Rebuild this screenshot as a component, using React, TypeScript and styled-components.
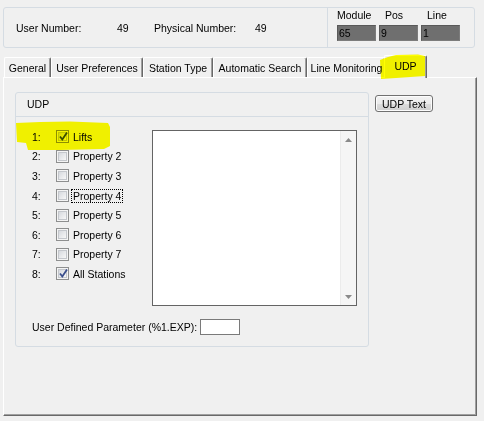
import React from "react";
import styled, { createGlobalStyle } from "styled-components";

const GlobalStyle = createGlobalStyle`
	html, body {
		margin: 0;
		padding: 0;
		background: #f0f0f0;
	}
	body {
		font-family: "Liberation Sans", Arial, sans-serif;
		font-size: 10.5px;
		color: #000;
	}
	* {
		box-sizing: border-box;
	}
`;

const Page = styled.div`
	position: relative;
	width: 484px;
	height: 421px;
	padding: 7px 0 0 3px;
	overflow: hidden;
`;

const InfoBox = styled.div`
	display: flex;
	width: 472px;
	height: 41px;
	border: 1px solid #d5dce3;
	border-radius: 3px;
`;

const NumbersPart = styled.div`
	display: flex;
	align-items: center;
	width: 323px;
	padding-left: 12px;
`;

const Cell = styled.span<{ $w?: number }>`
	width: ${({ $w }) => ($w ? `${$w}px` : "auto")};
	white-space: nowrap;
`;

const AddressPart = styled.div`
	display: flex;
	gap: 3px;
	flex: 1;
	padding: 1px 0 0 9px;
	border-left: 1px solid #d5dce3;
`;

const AddressCol = styled.div`
	display: flex;
	flex-direction: column;
	width: 39px;
`;

const AddressLabel = styled.div<{ $indent: number }>`
	height: 13px;
	line-height: 13px;
	margin-bottom: 3px;
	padding-left: ${({ $indent }) => $indent}px;
	white-space: nowrap;
`;

const AddressValue = styled.div`
	height: 16px;
	line-height: 14px;
	padding-left: 1px;
	background: #6f6f6f;
	border: 1px solid;
	border-color: #595959 #7c7c7c #7c7c7c #595959;
`;

const TabStrip = styled.div`
	display: flex;
	align-items: flex-end;
	height: 22px;
	margin-top: 7px;
	padding-left: 1px;
	position: relative;
	z-index: 1;
`;

const Tab = styled.div<{ $w: number; $active?: boolean }>`
	position: relative;
	z-index: ${({ $active }) => ($active ? 1 : 0)};
	width: ${({ $w }) => $w}px;
	height: ${({ $active }) => ($active ? 23 : 20)}px;
	margin-bottom: ${({ $active }) => ($active ? -1 : 0)}px;
	margin-left: ${({ $active }) => ($active ? -2 : 0)}px;
	display: flex;
	align-items: center;
	justify-content: center;
	padding-bottom: ${({ $active }) => ($active ? 2 : 0)}px;
	white-space: nowrap;
	background: #f0f0f0;
	border-top: 1px solid #ffffff;
	border-left: 1px solid #ffffff;
	border-right: 1px solid #696969;
	box-shadow: inset -1px 0 0 #a0a0a0;
	border-radius: 2px 2px 0 0;
`;

const Pane = styled.div`
	display: flex;
	align-items: flex-start;
	gap: 6px;
	width: 474px;
	height: 339px;
	padding: 14px 0 0 11px;
	border-top: 1px solid #ffffff;
	border-left: 1px solid #ffffff;
	border-right: 1px solid #696969;
	border-bottom: 1px solid #696969;
	box-shadow: inset -1px -1px 0 #a0a0a0;
`;

const Group = styled.div`
	width: 354px;
	height: 255px;
	border: 1px solid #d5dce3;
	border-radius: 3px;
`;

const GroupHeader = styled.div`
	height: 24px;
	line-height: 23px;
	padding-left: 11px;
	border-bottom: 1px solid #d5dce3;
`;

const GroupBody = styled.div`
	padding: 10px 11px 0 16px;
`;

const ListArea = styled.div`
	display: flex;
	align-items: flex-start;
`;

const RowList = styled.div`
	width: 120px;
	display: flex;
	flex-direction: column;
`;

const Row = styled.div`
	display: flex;
	align-items: center;
	height: 19.6px;
`;

const RowNumber = styled.span`
	width: 24px;
`;

const CheckBox = styled.span`
	position: relative;
	width: 13px;
	height: 13px;
	border: 1px solid #8e8f8f;
	background: #f4f4f4;
	flex-shrink: 0;

	&::before {
		content: "";
		position: absolute;
		inset: 1px;
		background: linear-gradient(135deg, #d6d9de, #f7f7f7);
		border: 1px solid #c4c7cc;
	}

	svg {
		position: absolute;
		left: 1px;
		top: 0px;
	}
`;

const RowLabel = styled.span<{ $focused?: boolean }>`
	margin-left: 2px;
	padding: 0 1px;
	line-height: 12px;
	border: 1px dotted ${({ $focused }) => ($focused ? "#000" : "transparent")};
	white-space: nowrap;
`;

const ListBox = styled.div`
	display: flex;
	justify-content: flex-end;
	margin-top: 3px;
	width: 206px;
	height: 176px;
	background: #fff;
	border: 1px solid #646464;
`;

const ScrollBar = styled.div`
	width: 16px;
	display: flex;
	flex-direction: column;
	align-items: center;
	justify-content: space-between;
	padding: 7px 0 6px;
	background: #f5f5f5;
	border-left: 1px solid #ebebeb;
`;

const ParamRow = styled.div`
	display: flex;
	align-items: center;
	margin-top: 13px;
`;

const ParamLabel = styled.span`
	width: 168px;
	white-space: nowrap;
`;

const ParamInput = styled.div`
	width: 40px;
	height: 16px;
	background: #fff;
	border: 1px solid #7a7a7a;
`;

const Button = styled.div`
	margin-top: 3px;
	width: 58px;
	height: 17px;
	display: flex;
	align-items: center;
	justify-content: center;
	border: 1px solid #707070;
	border-radius: 3px;
	background: linear-gradient(#f2f2f2, #ebebeb 50%, #dddddd 51%, #cfcfcf);
	box-shadow: inset 0 0 0 1px #fcfcfc;
	white-space: nowrap;
`;

const Marker = styled.svg`
	position: absolute;
	left: 0;
	top: 0;
	z-index: 2;
	pointer-events: none;
	mix-blend-mode: multiply;
`;

const tabs = [
	{ label: "General", w: 47 },
	{ label: "User Preferences", w: 92 },
	{ label: "Station Type", w: 70 },
	{ label: "Automatic Search", w: 94 },
	{ label: "Line Monitoring", w: 79 },
	{ label: "UDP", w: 43, active: true },
];

const properties = [
	{ label: "Lifts", checked: true },
	{ label: "Property 2" },
	{ label: "Property 3" },
	{ label: "Property 4", focused: true },
	{ label: "Property 5" },
	{ label: "Property 6" },
	{ label: "Property 7" },
	{ label: "All Stations", checked: true },
];

const address = [
	{ label: "Module", value: "65", indent: 0 },
	{ label: "Pos", value: "9", indent: 6 },
	{ label: "Line", value: "1", indent: 6 },
];

const Check = () => (
	<svg width="11" height="11" viewBox="0 0 11 11">
		<path d="M2 5.5 L4.3 8.5 L9 1.5" fill="none" stroke="#3b4f8c" strokeWidth="1.8" />
	</svg>
);

const Arrow = ({ down }: { down?: boolean }) => (
	<svg width="7" height="4" viewBox="0 0 7 4">
		<path d={down ? "M0 0 H7 L3.5 4 Z" : "M0 4 H7 L3.5 0 Z"} fill="#8a8a8a" />
	</svg>
);

const App = () => {
	return (
		<Page>
			<GlobalStyle />
			<InfoBox>
				<NumbersPart>
					<Cell $w={101}>User Number:</Cell>
					<Cell $w={37}>49</Cell>
					<Cell $w={101}>Physical Number:</Cell>
					<Cell>49</Cell>
				</NumbersPart>
				<AddressPart>
					{address.map((a) => (
						<AddressCol key={a.label}>
							<AddressLabel $indent={a.indent}>{a.label}</AddressLabel>
							<AddressValue>{a.value}</AddressValue>
						</AddressCol>
					))}
				</AddressPart>
			</InfoBox>

			<TabStrip>
				{tabs.map((t) => (
					<Tab key={t.label} $w={t.w} $active={t.active}>
						{t.label}
					</Tab>
				))}
			</TabStrip>

			<Pane>
				<Group>
					<GroupHeader>UDP</GroupHeader>
					<GroupBody>
						<ListArea>
							<RowList>
								{properties.map((p, i) => (
									<Row key={p.label}>
										<RowNumber>{i + 1}:</RowNumber>
										<CheckBox>{p.checked && <Check />}</CheckBox>
										<RowLabel $focused={p.focused}>{p.label}</RowLabel>
									</Row>
								))}
							</RowList>
							<ListBox>
								<ScrollBar>
									<Arrow />
									<Arrow down />
								</ScrollBar>
							</ListBox>
						</ListArea>
						<ParamRow>
							<ParamLabel>User Defined Parameter (%1.EXP):</ParamLabel>
							<ParamInput />
						</ParamRow>
					</GroupBody>
				</Group>
				<Button>UDP Text</Button>
			</Pane>

			<Marker width="484" height="421" viewBox="0 0 484 421">
				<path
					d="M380 60 L388 57 L396 55 L418 54.5 L425 56 L425 76 L396 78 L381 79 Z"
					fill="#ffff00"
				/>
				<path
					d="M16 123 L40 122 L70 121.5 L108 123 L110 127 L110 146 L104 149 L60 150 L28 150 L26 143 L17 142 Z"
					fill="#ffff00"
				/>
			</Marker>
		</Page>
	);
};

export default App;
